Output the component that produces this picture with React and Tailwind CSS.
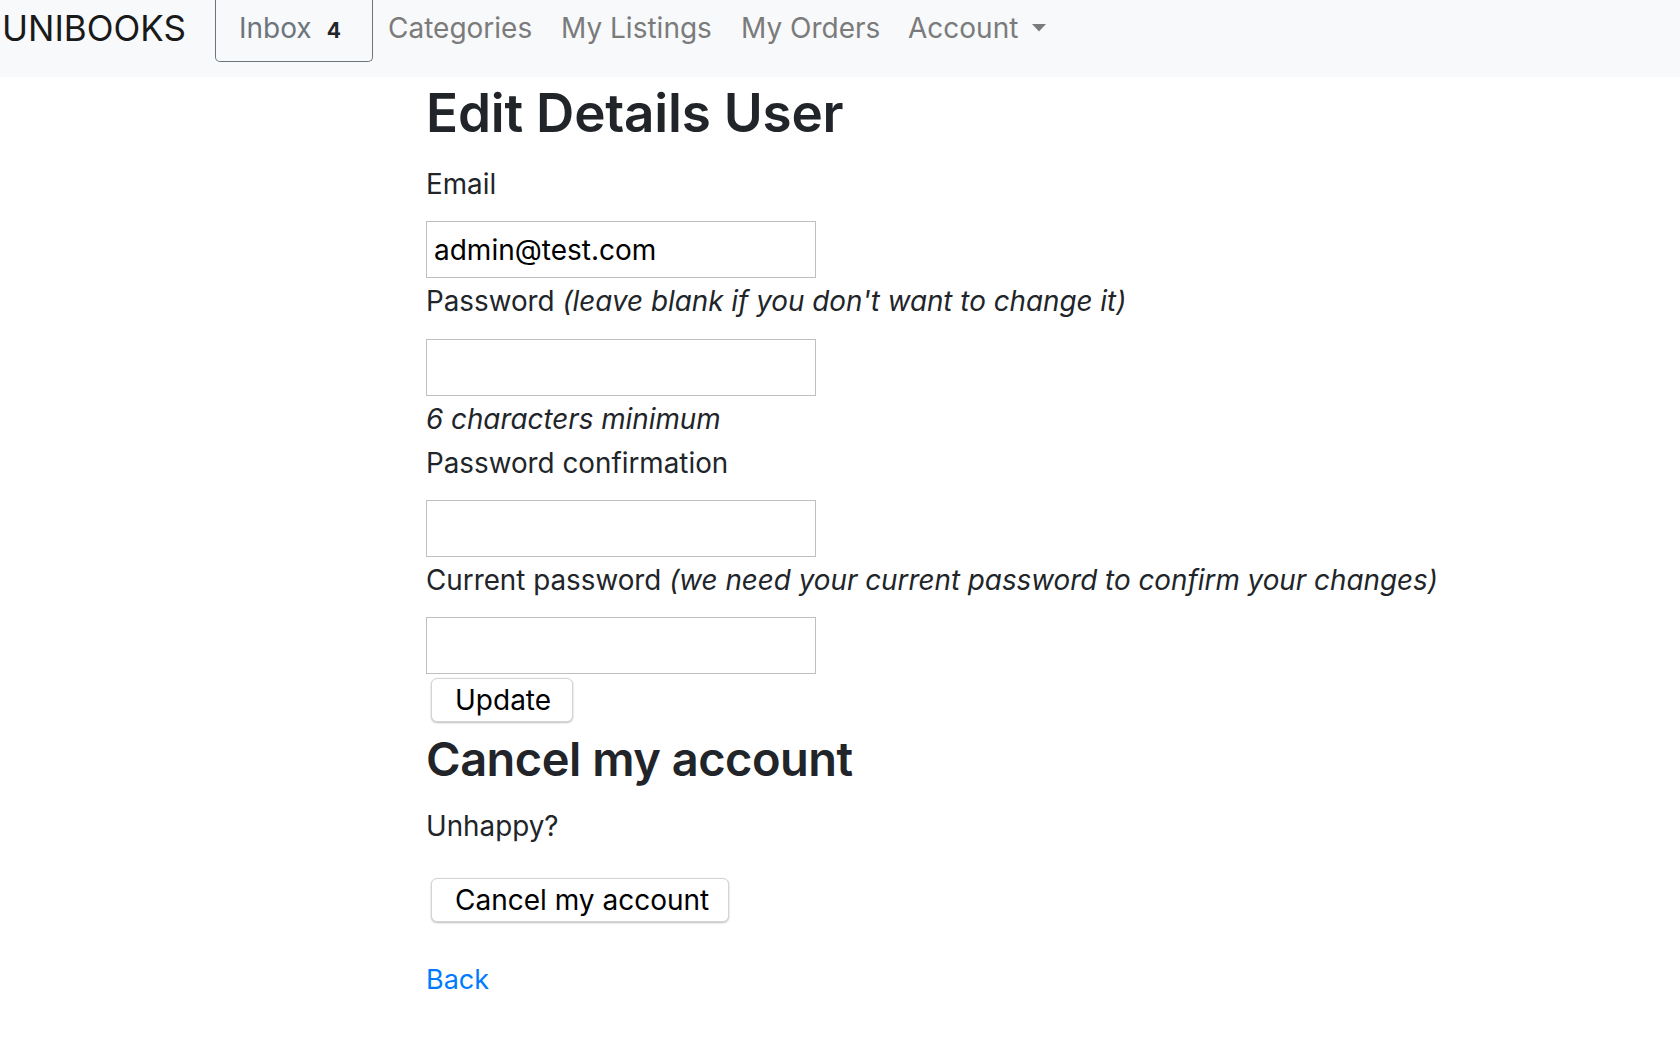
import React from 'react';

const font = { fontFamily: 'Inter, "Liberation Sans", sans-serif' };

const NavLink = ({ label, width }) => (
  <div className="shrink-0 pt-[14px] text-[28px] leading-none text-[#7b7b7c]" style={{ width }}>
    {label}
  </div>
);

const Field = ({ value = '' }) => (
  <div className="w-[390px] h-[57px] border border-[#bfbfbf] bg-white flex items-center pl-[7px] text-[28px] leading-none text-black">
    {value}
  </div>
);

const Button = ({ label, width }) => (
  <button
    className="ml-[5px] h-[44px] rounded-[6px] border border-[#d4d4d4] bg-white pl-[23px] text-left text-[28px] leading-none text-black shadow-[0_1px_2px_rgba(0,0,0,0.25)]"
    style={{ width }}
  >
    {label}
  </button>
);

export default function App() {
  return (
    <div className="min-h-[1064px] bg-white text-[#212529]" style={font}>
      {/* Navbar */}
      <nav className="h-[77px] bg-[#f8f9fa] flex items-start">
        <div className="w-[215px] shrink-0 pl-[2px] pt-[11px] text-[35px] leading-none text-[#1a1a1a]">
          UNIBOOKS
        </div>
        <div className="w-[158px] h-[62px] shrink-0 border border-t-0 border-[#6c757d] rounded-b-[5px] flex items-start pl-[23px] pt-[14px]">
          <span className="text-[28px] leading-none text-[#6c757d]">Inbox</span>
          <span className="ml-[15px] mt-[6px] text-[21px] leading-none font-bold text-[#212529]">4</span>
        </div>
        <div className="w-[15px] shrink-0" />
        <NavLink label="Categories" width={173} />
        <NavLink label="My Listings" width={180} />
        <NavLink label="My Orders" width={167} />
        <div className="flex items-start pt-[14px] text-[28px] leading-none text-[#7b7b7c]">
          <span>Account</span>
          <svg className="ml-[14px] mt-[10px]" width="14" height="8" viewBox="0 0 14 8">
            <path d="M0 0 L14 0 L7 7.5 Z" fill="#7b7b7c" />
          </svg>
        </div>
      </nav>

      {/* Form */}
      <div className="pl-[426px]">
        <h2 className="mt-[10px] text-[53px] leading-none font-semibold tracking-[-0.2px]">Edit Details User</h2>

        <div className="mt-[30px] text-[27.8px] leading-[28px]">Email</div>
        <div className="mt-[23px]">
          <Field value="admin@test.com" />
        </div>

        <div className="mt-[9px] text-[27.8px] leading-[28px] whitespace-nowrap">
          Password <i>(leave blank if you don't want to change it)</i>
        </div>
        <div className="mt-[24px]">
          <Field />
        </div>
        <div className="mt-[9px] text-[27.8px] leading-[28px] italic">6 characters minimum</div>

        <div className="mt-[16px] text-[27.8px] leading-[28px]">Password confirmation</div>
        <div className="mt-[23px]">
          <Field />
        </div>

        <div className="mt-[9px] text-[27.8px] leading-[28px] whitespace-nowrap">
          Current password <i>(we need your current password to confirm your changes)</i>
        </div>
        <div className="mt-[23px]">
          <Field />
        </div>
        <div className="mt-[4px]">
          <Button label="Update" width={142} />
        </div>

        <h3 className="mt-[13px] text-[47px] leading-none font-semibold tracking-[-0.5px]">Cancel my account</h3>

        <div className="mt-[30px] text-[27.8px] leading-[28px]">Unhappy?</div>
        <div className="mt-[38px]">
          <Button label="Cancel my account" width={298} />
        </div>

        <div className="mt-[44px]">
          <a href="#" className="text-[27px] leading-none text-[#007bff]">Back</a>
        </div>
      </div>
    </div>
  );
}
